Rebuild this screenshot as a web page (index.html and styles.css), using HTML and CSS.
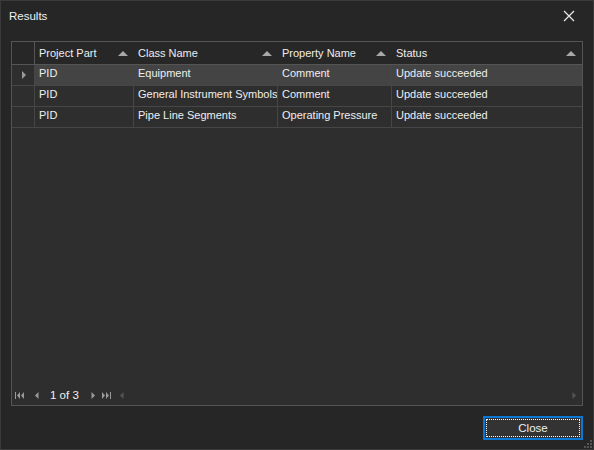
FILE: index.html
```html
<!DOCTYPE html>
<html>
<head>
<meta charset="utf-8">
<link rel="stylesheet" href="styles.css">
</head>
<body>
<div class="window">
  <div class="titlebar">
    <span class="title">Results</span>
    <svg class="xbtn" width="12" height="12" viewBox="0 0 12 12"><path d="M1 1 L11 11 M11 1 L1 11" stroke="#e6e6e6" stroke-width="1.3" fill="none"/></svg>
  </div>
  <div class="content">
    <div class="grid">
      <div class="row header">
        <div class="cell ind"></div>
        <div class="cell hc">Project Part<span class="sort"></span></div>
        <div class="cell hc">Class Name<span class="sort"></span></div>
        <div class="cell hc">Property Name<span class="sort"></span></div>
        <div class="cell hc last">Status<span class="sort"></span></div>
      </div>
      <div class="row sel">
        <div class="cell ind"><span class="arrow"></span></div>
        <div class="cell">PID</div>
        <div class="cell">Equipment</div>
        <div class="cell">Comment</div>
        <div class="cell last">Update succeeded</div>
      </div>
      <div class="row">
        <div class="cell ind"></div>
        <div class="cell">PID</div>
        <div class="cell">General Instrument Symbols</div>
        <div class="cell">Comment</div>
        <div class="cell last">Update succeeded</div>
      </div>
      <div class="row">
        <div class="cell ind"></div>
        <div class="cell">PID</div>
        <div class="cell">Pipe Line Segments</div>
        <div class="cell">Operating Pressure</div>
        <div class="cell last">Update succeeded</div>
      </div>
      <div class="fill"></div>
      <div class="footer">
        <svg class="nav first" width="9" height="7" viewBox="0 0 9 7"><rect x="0" y="0" width="1" height="7" fill="#9a9a9a"/><path d="M5 0 L2 3.5 L5 7Z M9 0 L6 3.5 L9 7Z" fill="#9a9a9a"/></svg>
        <svg class="nav prev" width="4" height="7" viewBox="0 0 4 7"><path d="M3.5 0 L0 3.5 L3.5 7Z" fill="#9a9a9a"/></svg>
        <span class="pager">1 of 3</span>
        <svg class="nav next" width="4" height="7" viewBox="0 0 4 7"><path d="M0.5 0 L4 3.5 L0.5 7Z" fill="#9a9a9a"/></svg>
        <svg class="nav lastp" width="9" height="7" viewBox="0 0 9 7"><path d="M0 0 L3 3.5 L0 7Z M4 0 L7 3.5 L4 7Z" fill="#9a9a9a"/><rect x="8" y="0" width="1" height="7" fill="#9a9a9a"/></svg>
        <svg class="nav sleft" width="4" height="7" viewBox="0 0 4 7"><path d="M3.5 0 L0 3.5 L3.5 7Z" fill="#555"/></svg>
        <span class="grow"></span>
        <svg class="nav sright" width="4" height="7" viewBox="0 0 4 7"><path d="M0.5 0 L4 3.5 L0.5 7Z" fill="#555"/></svg>
      </div>
    </div>
  </div>
  <div class="buttons">
    <button class="btn"><span class="focus">Close</span></button>
  </div>
  <svg class="grip" width="10" height="10" viewBox="0 0 10 10">
    <g fill="#555">
      <rect x="7" y="1" width="2" height="2"/>
      <rect x="4" y="4" width="2" height="2"/><rect x="7" y="4" width="2" height="2"/>
      <rect x="1" y="7" width="2" height="2"/><rect x="4" y="7" width="2" height="2"/><rect x="7" y="7" width="2" height="2"/>
    </g>
  </svg>
</div>
</body>
</html>
```

FILE: styles.css
```css
* { box-sizing: border-box; }
html, body { margin: 0; padding: 0; background: #262626; }
body { font-family: "Liberation Sans", Arial, sans-serif; font-size: 11px; color: #ececec; }

.window {
  position: relative;
  width: 594px;
  height: 450px;
  border: 1px solid #3a3a3a;
  background: #262626;
  display: flex;
  flex-direction: column;
}

.titlebar {
  height: 31px;
  display: flex;
  align-items: center;
  justify-content: space-between;
  padding: 0 18px 2px 8px;
}
.title { font-size: 11.5px; color: #f0f0f0; }
.xbtn { display: block; }

.content {
  padding: 9px 10px 0 10px;
}

.grid {
  width: 572px;
  height: 365px;
  border: 1px solid #555555;
  background: #2e2e2e;
  display: flex;
  flex-direction: column;
}

.row {
  display: grid;
  grid-template-columns: 23px 99px 144px 114px 1fr;
  height: 21px;
  border-bottom: 1px solid #464646;
}
.row .cell {
  border-right: 1px solid #464646;
  padding-left: 4px;
  line-height: 17px;
  white-space: nowrap;
  overflow: hidden;
  color: #eeeeee;
}
.row .cell.last { border-right: none; }
.row .cell.ind { padding: 0; position: relative; background: #2e2e2e; }
.row.sel .cell { background: #444444; }
.row.sel .cell.ind { background: #2e2e2e; }

.row.header {
  height: 23px;
  background: #272727;
  border-bottom: 1px solid #555555;
}
.row.header .cell {
  line-height: 22px;
  background: #272727;
  border-right: none;
  position: relative;
  display: flex;
  align-items: center;
  padding-left: 4px;
  padding-right: 6px;
}
.row.header .cell.ind { border-right: 1px solid #555555; }
.row.header .hc::after {
  content: "";
  position: absolute;
  right: -1px;
  top: 2px;
  bottom: 1px;
  width: 1px;
  background: #6a6a6a;
}
.row.header .hc.last::after { display: none; }
.sort {
  margin-left: auto;
  width: 0; height: 0;
  border-left: 5px solid transparent;
  border-right: 5px solid transparent;
  border-bottom: 5px solid #a8a8a8;
}

.arrow {
  position: absolute;
  left: 10px;
  top: 6px;
  width: 0; height: 0;
  border-top: 4px solid transparent;
  border-bottom: 4px solid transparent;
  border-left: 4px solid #9a9a9a;
}

.fill { flex: 1; }

.footer {
  height: 19px;
  display: flex;
  align-items: center;
  padding-left: 3px;
  padding-right: 6px;
  padding-bottom: 1px;
}
.nav { display: block; }
.first { margin-right: 11px; }
.prev { margin-right: 11px; }
.pager { color: #f2f2f2; font-size: 11.5px; margin-right: 12px; }
.next { margin-right: 7px; }
.lastp { margin-right: 9px; }
.grow { flex: 1; }

.buttons {
  display: flex;
  justify-content: flex-end;
  padding: 10px 10px 0 0;
}
.btn {
  width: 100px;
  height: 24px;
  border: 2px solid #0a78d4;
  background: #333333;
  padding: 1px;
  font-family: inherit;
  font-size: 11.5px;
  color: #f0f0f0;
  display: flex;
}
.focus {
  flex: 1;
  border: 1px dotted #ffffff;
  display: flex;
  align-items: center;
  justify-content: center;
}

.grip {
  position: absolute;
  right: 0;
  bottom: 0;
}
```
